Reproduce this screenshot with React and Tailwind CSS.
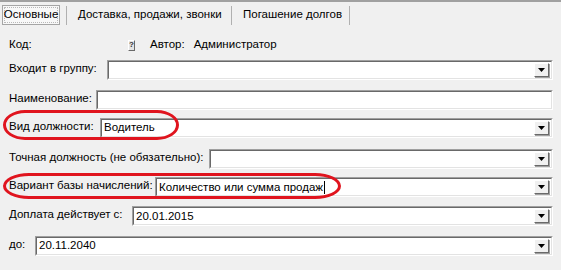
import React from 'react'

const font = { fontFamily: '"Liberation Sans", Arial, sans-serif' }

function Arrow() {
  return (
    <div className="flex h-full w-[15px] items-center justify-center border border-t-white border-l-white border-r-[#696969] border-b-[#696969] bg-[#f0f0f0] shadow-[1px_1px_0_#a0a0a0]">
      <svg width="7" height="4" viewBox="0 0 7 4">
        <path d="M0 0h7L3.5 4z" fill="#000" />
      </svg>
    </div>
  )
}

function Field({ value, combo = true, cursor = false }) {
  return (
    <div className="h-[20px] flex-1 border-t border-l border-t-[#a0a0a0] border-l-[#a0a0a0] border-b border-r border-b-white border-r-white">
      <div className="flex h-full items-stretch border-t border-l border-t-[#696969] border-l-[#696969] border-b border-r border-b-[#e3e3e3] border-r-[#e3e3e3] bg-white">
        <div className="flex flex-1 items-center pl-[2px] text-[11.5px] text-black">
          {value}
          {cursor && <span className="ml-[1px] inline-block h-[13px] w-[1px] bg-black" />}
        </div>
        {combo && (
          <div className="py-[1px] pr-[2px]">
            <Arrow />
          </div>
        )}
      </div>
    </div>
  )
}

function Row({ label, labelW, className = '', ...rest }) {
  return (
    <div className={`flex items-center pr-[8px] ${className}`}>
      <div className="shrink-0 pb-[3px] text-[11.5px] text-black" style={{ width: labelW }}>
        {label}
      </div>
      <Field {...rest} />
    </div>
  )
}

export default function App() {
  return (
    <div className="relative h-[270px] w-[561px] overflow-hidden bg-[#f0f0f0]" style={font}>
      {/* tabs */}
      <div className="flex h-[26px] items-center border-t-2 border-[#a0a0a0] pt-[2px] text-[11.5px] text-black">
        <div className="ml-[2px] flex h-[20px] w-[58px] items-center border border-[#a5a5a5] bg-[#f8f8f8] pl-[1px]">
          <div className="flex h-[16px] w-[54px] items-center justify-center border border-dotted border-[#b8b8b8]">
            Основные
          </div>
        </div>
        <div className="ml-[6px] h-[19px] w-[1px] bg-[#b0b0b0]" />
        <div className="w-[164px] pl-[11px]">Доставка, продажи, звонки</div>
        <div className="h-[19px] w-[1px] bg-[#b0b0b0]" />
        <div className="w-[117px] pl-[11px]">Погашение долгов</div>
        <div className="h-[19px] w-[1px] bg-[#b0b0b0]" />
      </div>

      <div className="pl-[9px]">
        {/* code / author */}
        <div className="mt-[10px] flex h-[18px] items-center text-[11.5px] text-black">
          <div className="w-[119px]">Код:</div>
          <div className="flex h-[11px] w-[7px] items-center justify-center border border-t-white border-l-white border-r-[#696969] border-b-[#696969] bg-[#e4e4e4] text-[8px] font-bold leading-none text-[#333]">
            ?
          </div>
          <div className="ml-[15px]">Автор:</div>
          <div className="ml-[9px]">Администратор</div>
        </div>

        <Row className="mt-[6px]" label="Входит в группу:" labelW={98} value="" />
        <Row className="mt-[10px]" label="Наименование:" labelW={87} value="" combo={false} />
        <Row className="mt-[7px]" label="Вид должности:" labelW={91} value="Водитель" />
        <Row className="mt-[11px]" label="Точная должность (не обязательно):" labelW={200} value="" />
        <Row className="mt-[8px]" label="Вариант базы начислений:" labelW={146} value="Количество или сумма продаж" cursor />
        <Row className="mt-[9px]" label="Доплата действует с:" labelW={123} value="20.01.2015" />
        <Row className="mt-[9px]" label="до:" labelW={26} value="20.11.2040" />
      </div>

      {/* red annotation marks */}
      <div className="pointer-events-none absolute left-[3px] top-[110px] h-[30px] w-[176px] rounded-[22px/15px] border-[3px] border-[#e0141e]" />
      <div className="pointer-events-none absolute left-[3px] top-[173px] h-[26px] w-[338px] rounded-[26px/13px] border-[3px] border-[#e0141e]" />
    </div>
  )
}
